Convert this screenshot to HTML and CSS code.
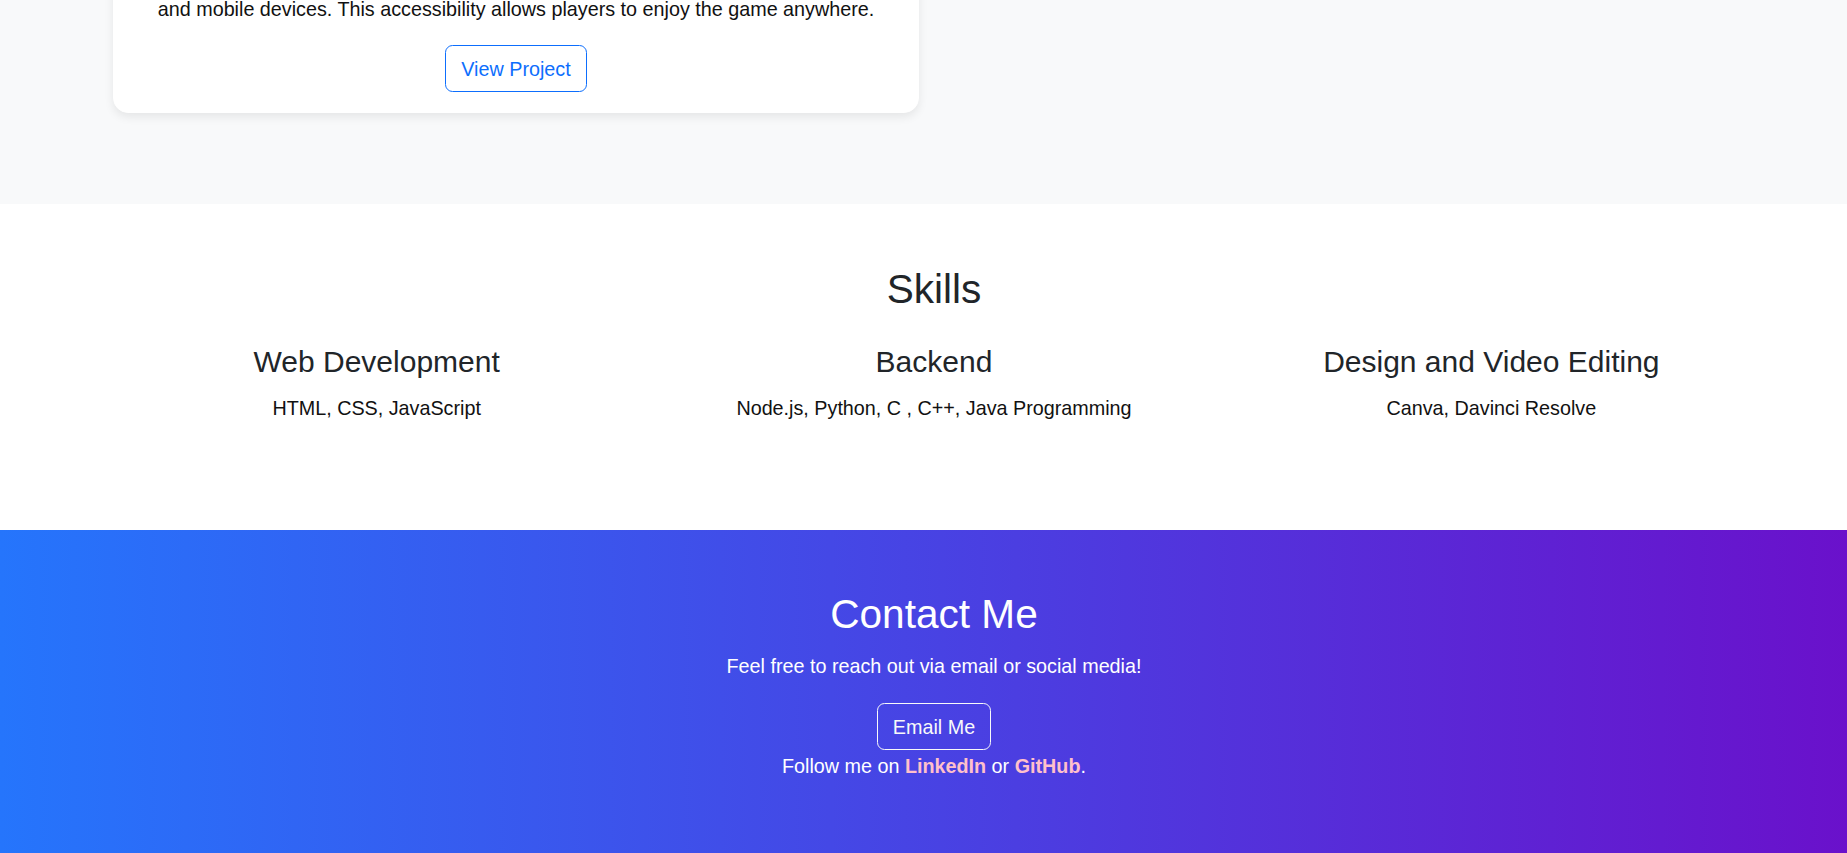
FILE: index.html
```html
<!DOCTYPE html>
<html lang="en">
<head>
<meta charset="utf-8">
<title>Portfolio</title>
<link rel="stylesheet" href="styles.css">
</head>
<body>
  <section class="projects">
    <div class="container">
      <div class="row two">
        <div class="col">
          <div class="card">
            <div class="card-body">
              <p class="card-text">and mobile devices. This accessibility allows players to enjoy the game anywhere.</p>
              <a class="btn btn-primary-outline" href="#">View Project</a>
            </div>
          </div>
        </div>
        <div class="col"></div>
      </div>
    </div>
  </section>

  <section class="skills">
    <div class="container">
      <h2 class="section-title">Skills</h2>
      <div class="row three">
        <div class="col skill">
          <h3>Web Development</h3>
          <p>HTML, CSS, JavaScript</p>
        </div>
        <div class="col skill">
          <h3>Backend</h3>
          <p>Node.js, Python, C , C++, Java Programming</p>
        </div>
        <div class="col skill">
          <h3>Design and Video Editing</h3>
          <p>Canva, Davinci Resolve</p>
        </div>
      </div>
    </div>
  </section>

  <section class="contact">
    <div class="container">
      <h2 class="contact-title">Contact Me</h2>
      <p class="lead">Feel free to reach out via email or social media!</p>
      <div class="btn-wrap"><a class="btn btn-light-outline" href="#">Email Me</a></div>
      <p class="follow">Follow me on <a href="#">LinkedIn</a> or <a href="#">GitHub</a>.</p>
    </div>
  </section>
</body>
</html>
```
FILE: styles.css
```css
* { box-sizing: border-box; }
html, body { margin: 0; padding: 0; }
body {
  font-family: "Liberation Sans", Arial, sans-serif;
  font-size: 19.75px;
  line-height: 30px;
  color: #212529;
  background: #fff;
  overflow-x: hidden;
}
.container {
  margin-left: 98px;
  width: 1672px;
}
.row { display: grid; }
.row.two { grid-template-columns: 1fr 1fr; }
.row.three { grid-template-columns: 1fr 1fr 1fr; }
.col { padding: 0 15px; min-width: 0; }

/* Projects */
.projects {
  background: #f8f9fa;
  margin-top: -27px;
  padding-bottom: 91px;
}
.card {
  background: #fff;
  border: 1px solid #fff;
  border-radius: 15px;
  box-shadow: 0 4px 10px rgba(0, 0, 0, 0.08);
}
.card-body {
  padding: 20px;
  text-align: center;
}
.card-text {
  margin: 0 0 21px;
  color: #111;
}
.btn {
  display: inline-block;
  font-size: 19.75px;
  line-height: 30px;
  padding: 7.5px 15px;
  border: 1px solid transparent;
  border-radius: 7.5px;
  text-decoration: none;
  background: transparent;
}
.btn-primary-outline {
  color: #0d6efd;
  border-color: #0d6efd;
}
.btn-light-outline {
  color: #f8f9fa;
  border-color: #f8f9fa;
}

/* Skills */
.skills {
  padding: 61px 0 87px;
  text-align: center;
}
.section-title {
  font-size: 40.6px;
  font-weight: 500;
  line-height: 48px;
  margin: 0 0 31px;
}
.skill h3 {
  font-size: 30px;
  font-weight: 500;
  line-height: 36px;
  margin: 0 0 13px;
}
.skill p {
  margin: 0 0 20px;
  color: #111;
}

/* Contact */
.contact {
  background: linear-gradient(90deg, #2575fc, #6a11cb);
  color: #fff;
  text-align: center;
  padding: 60px 0 80px;
}
.contact-title {
  font-size: 40.6px;
  font-weight: 500;
  line-height: 48px;
  margin: 0 0 13px;
}
.lead {
  margin: 0 0 22px;
}
.btn-wrap { margin: 0; }
.follow {
  margin: 1px 0 0;
}
.follow a {
  color: #ffc0cb;
  font-weight: 700;
  text-decoration: none;
}
```
